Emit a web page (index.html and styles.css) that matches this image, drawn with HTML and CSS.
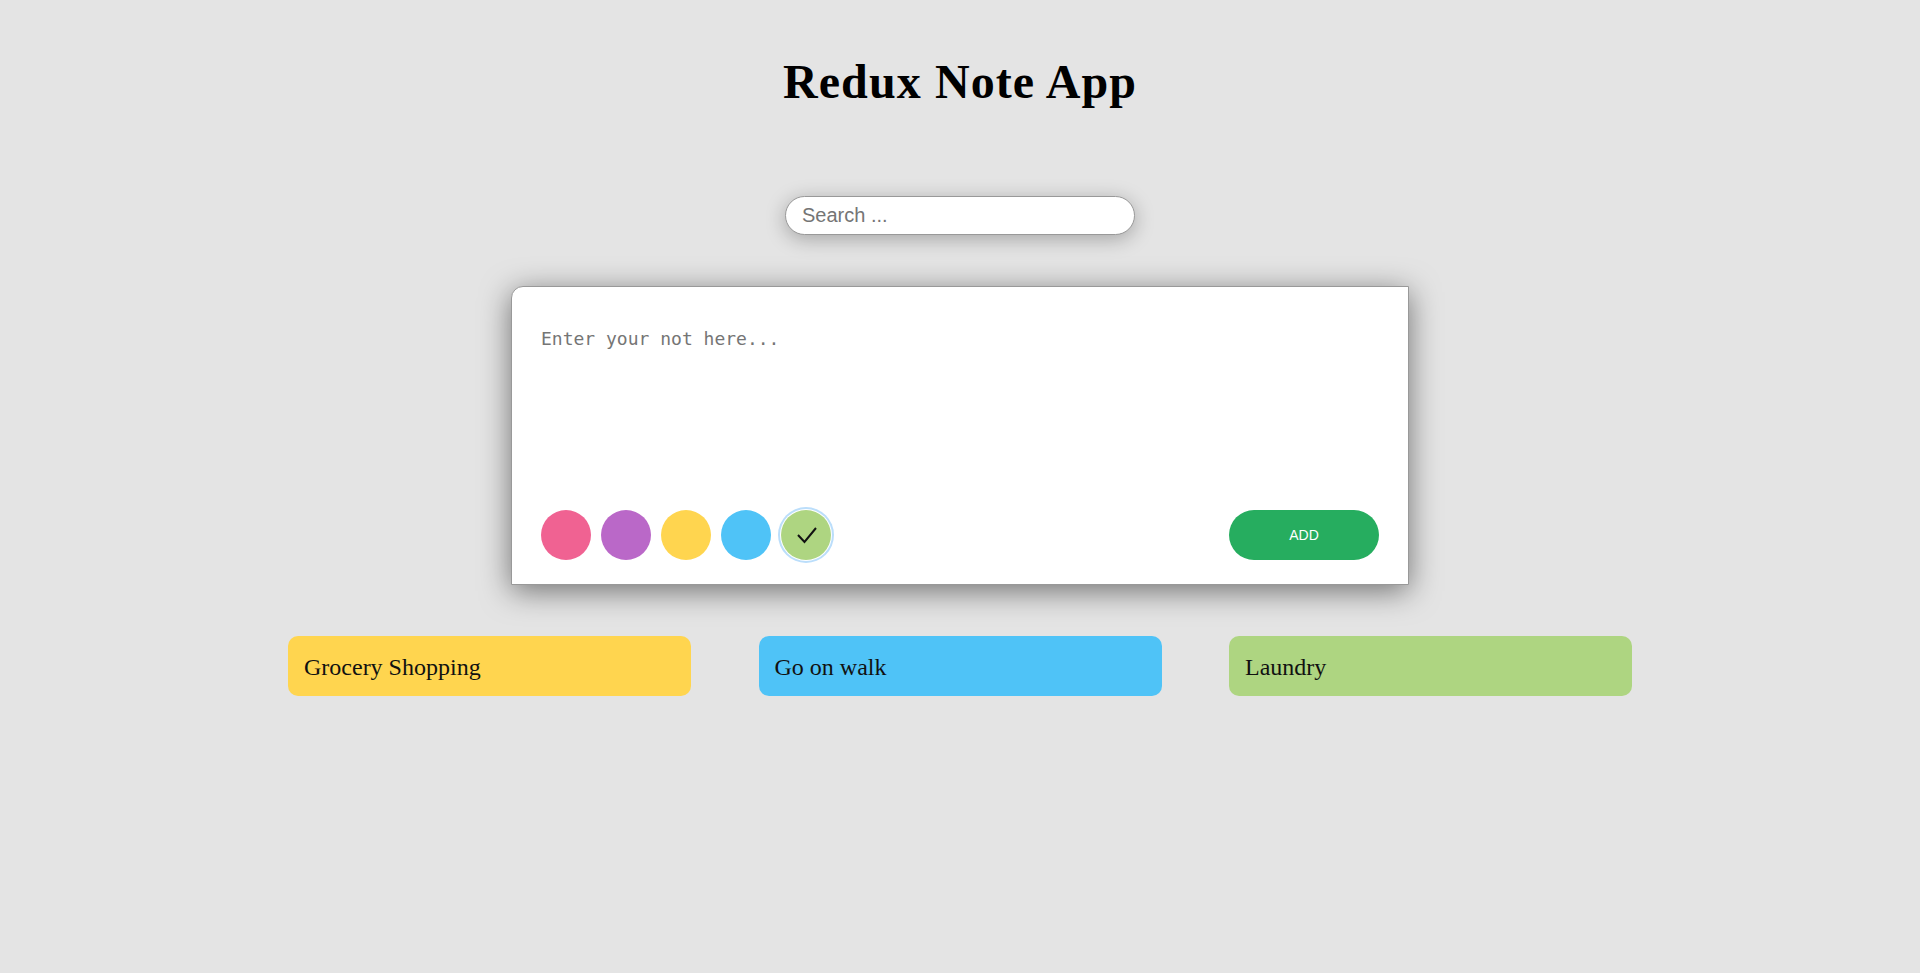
FILE: index.html
```html
<!DOCTYPE html>
<html lang="en">
<head>
<meta charset="utf-8">
<title>Redux Note App</title>
<link rel="stylesheet" href="styles.css">
</head>
<body>
<div class="app">
  <h1 class="title">Redux Note App</h1>
  <input class="search" type="text" placeholder="Search ...">
  <div class="note">
    <textarea class="note-input" placeholder="Enter your not here..."></textarea>
    <div class="note-footer">
      <div class="colors">
        <span class="color pink"></span>
        <span class="color purple"></span>
        <span class="color yellow"></span>
        <span class="color blue"></span>
        <span class="color green selected">
          <svg width="50" height="50" viewBox="0 0 50 50"><polyline points="17,25 23.5,32 35,18" fill="none" stroke="#111" stroke-width="2"/></svg>
        </span>
      </div>
      <button class="add">ADD</button>
    </div>
  </div>
  <div class="cards">
    <div class="card yellow">Grocery Shopping</div>
    <div class="card blue">Go on walk</div>
    <div class="card green">Laundry</div>
  </div>
</div>
</body>
</html>
```
FILE: styles.css
```css
html, body {
  margin: 0;
  padding: 0;
  background: #e4e4e4;
}
body {
  font-family: "Liberation Serif", serif;
  min-height: 973px;
}
.app {
  display: flex;
  flex-direction: column;
  align-items: center;
}
.title {
  margin: 52px 0 0;
  font-family: "Liberation Serif", serif;
  font-weight: 700;
  font-size: 48px;
  letter-spacing: 1.1px;
  line-height: 60px;
  color: #000;
}
.search {
  margin-top: 84px;
  width: 350px;
  height: 39px;
  box-sizing: border-box;
  border: 1px solid #999;
  border-radius: 20px;
  padding: 0 16px;
  font-family: "Liberation Sans", Arial, sans-serif;
  font-size: 20px;
  background: #fff;
  box-shadow: 0 4px 20px rgba(0, 0, 0, 0.28);
  outline: none;
}
.search::placeholder {
  color: #757575;
}
.note {
  margin-top: 51px;
  width: 898px;
  height: 299px;
  box-sizing: border-box;
  background: #fff;
  border: 1px solid #999;
  border-radius: 12px 0 0 0;
  padding: 41px 29px 24px;
  display: flex;
  flex-direction: column;
  box-shadow: 0 6px 30px rgba(0, 0, 0, 0.5);
}
.note-input {
  flex: 1;
  border: none;
  outline: none;
  resize: none;
  padding: 0;
  margin: 0;
  font-family: "DejaVu Sans Mono", monospace;
  font-size: 18px;
  color: #222;
  background: transparent;
}
.note-input::placeholder {
  color: #757575;
}
.note-footer {
  display: flex;
  justify-content: space-between;
  align-items: center;
  height: 50px;
}
.colors {
  display: flex;
  gap: 10px;
}
.color {
  width: 50px;
  height: 50px;
  border-radius: 50%;
  display: block;
}
.color svg {
  display: block;
}
.color.selected {
  box-shadow: 0 0 0 1px #fff, 0 0 0 3px #bbdefb;
}
.pink { background: #f06292; }
.purple { background: #ba68c8; }
.yellow { background: #ffd54f; }
.blue { background: #4fc3f7; }
.green { background: #aed581; }
.add {
  width: 150px;
  height: 50px;
  border: none;
  border-radius: 25px;
  background: #26ad5f;
  color: #fff;
  font-family: "Liberation Sans", Arial, sans-serif;
  font-size: 14px;
  padding: 0;
}
.cards {
  margin-top: 51px;
  width: 1344px;
  display: flex;
  justify-content: space-between;
}
.card {
  width: 403px;
  height: 60px;
  box-sizing: border-box;
  border-radius: 10px;
  padding: 3px 16px 0;
  display: flex;
  align-items: center;
  font-family: "Liberation Serif", serif;
  font-size: 24px;
  color: #111;
}
```
